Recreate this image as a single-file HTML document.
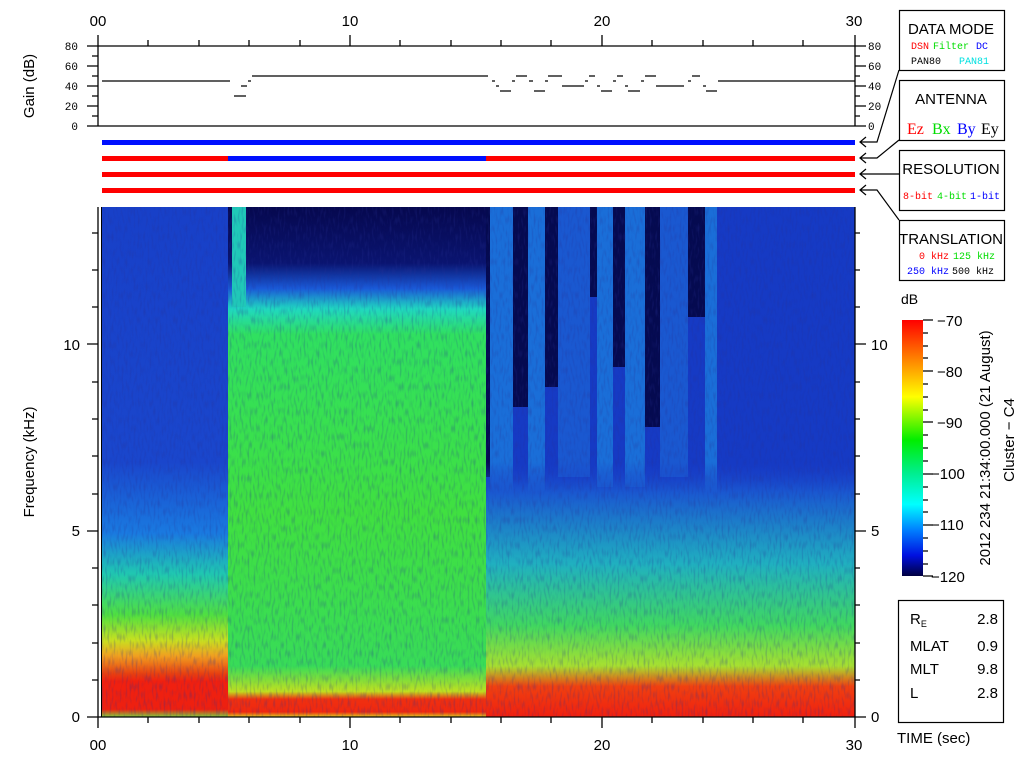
<!DOCTYPE html>
<html><head><meta charset="utf-8"><style>
html,body{margin:0;padding:0;background:#fff;width:1024px;height:768px;overflow:hidden}
svg text{font-family:"Liberation Sans Narrow","Liberation Sans",sans-serif}
.m{font-family:"Liberation Mono",monospace}
</style></head><body>
<svg width="1024" height="768" viewBox="0 0 1024 768" xmlns="http://www.w3.org/2000/svg">
<defs>
<linearGradient id="gA" x1="0" y1="0" x2="0" y2="1">
<stop offset="0" stop-color="#1840c8"/><stop offset="0.5" stop-color="#1a46cc"/>
<stop offset="0.64" stop-color="#1a7ae0"/><stop offset="0.72" stop-color="#20c8b0"/>
<stop offset="0.8" stop-color="#50e040"/><stop offset="0.85" stop-color="#c8e020"/>
<stop offset="0.88" stop-color="#f0a020"/><stop offset="0.915" stop-color="#e84010"/>
<stop offset="0.93" stop-color="#f02010"/><stop offset="0.985" stop-color="#ee2010"/><stop offset="1" stop-color="#80d040"/>
</linearGradient>
<linearGradient id="gB" x1="0" y1="0" x2="0" y2="1">
<stop offset="0" stop-color="#06084e"/><stop offset="0.11" stop-color="#0a1470"/>
<stop offset="0.16" stop-color="#1a5ad8"/><stop offset="0.2" stop-color="#20d8c0"/>
<stop offset="0.25" stop-color="#30e060"/><stop offset="0.6" stop-color="#40e040"/><stop offset="0.9" stop-color="#38dc58"/>
<stop offset="0.95" stop-color="#c0e020"/><stop offset="0.965" stop-color="#f03010"/>
<stop offset="0.99" stop-color="#f02810"/><stop offset="1" stop-color="#e0d020"/>
</linearGradient>
<linearGradient id="gC" x1="0" y1="0" x2="0" y2="1">
<stop offset="0" stop-color="#1a3ec8" stop-opacity="0"/><stop offset="0.5" stop-color="#1a3ec8" stop-opacity="0"/>
<stop offset="0.56" stop-color="#1a58d0"/><stop offset="0.7" stop-color="#20b0c0"/>
<stop offset="0.82" stop-color="#40d860"/><stop offset="0.9" stop-color="#a8e030"/>
<stop offset="0.94" stop-color="#f04010"/><stop offset="1" stop-color="#f02010"/>
</linearGradient>
<linearGradient id="cb" x1="0" y1="0" x2="0" y2="1">
<stop offset="0" stop-color="#ff0000"/><stop offset="0.15" stop-color="#ff8000"/>
<stop offset="0.3" stop-color="#ffff00"/><stop offset="0.47" stop-color="#00ee00"/>
<stop offset="0.6" stop-color="#00ee90"/><stop offset="0.72" stop-color="#00ffff"/>
<stop offset="0.82" stop-color="#0080ff"/><stop offset="0.92" stop-color="#0010e0"/>
<stop offset="1" stop-color="#000040"/>
</linearGradient>
<filter id="n" x="0" y="0" width="1" height="1"><feTurbulence type="fractalNoise" baseFrequency="0.5 0.12" numOctaves="1" seed="3"/><feColorMatrix values="0 0 0 0 0.02 0 0 0 0 0.03 0 0 0 0 0.3 0 0 0 1.6 -0.75"/><feComposite in2="SourceGraphic" operator="in"/></filter>
</defs>

<g font-size="15" text-anchor="middle">
<text x="98" y="26">00</text><text x="350" y="26">10</text><text x="602" y="26">20</text><text x="854" y="26">30</text>
</g>
<g stroke="#000" stroke-width="1.3" fill="none">
<line x1="87" y1="46" x2="855" y2="46"/><line x1="87" y1="126" x2="855" y2="126"/>
<line x1="98" y1="35" x2="98" y2="126"/><line x1="855" y1="35" x2="855" y2="126"/>
<path d="M87 66h11M87 86h11M87 106h11M92 56h6M92 76h6M92 96h6M92 116h6"/>
<path d="M855 46h11M855 66h11M855 86h11M855 106h11M855 126h11M855 56h5M855 76h5M855 96h5M855 116h5"/>
<path d="M148 40v6M199 40v6M249 40v6M300 40v6M350 35v11M400 40v6M451 40v6M501 40v6M551 40v6M602 35v11M652 40v6M703 40v6M753 40v6M803 40v6"/>
<path d="M102 81H230M234 96h12M241 86h6M248 81h3M252 76H488M492 81h3M496 86h3M500 91h11M512 81h3M516 76h11M529 81h4M534 91h11M545 81h3M548 76h14M562 86h22M585 81h3M589 76h6M597 86h3M601 91h11M613 81h3M617 76h6M625 86h3M628 91h12M641 81h3M645 76h11M656 86h28M688 81h3M692 76h8M703 86h3M706 91h11M718 81h137"/>
</g>
<g font-size="11" text-anchor="end">
<text x="78" y="50" class="m">80</text><text x="78" y="70" class="m">60</text><text x="78" y="90" class="m">40</text><text x="78" y="110" class="m">20</text><text x="78" y="130" class="m">0</text>
</g>
<g font-size="11">
<text x="868" y="50" class="m">80</text><text x="868" y="70" class="m">60</text><text x="868" y="90" class="m">40</text><text x="868" y="110" class="m">20</text><text x="868" y="130" class="m">0</text>
</g>
<text transform="translate(34,86) rotate(-90)" font-size="15" text-anchor="middle">Gain (dB)</text>

<rect x="102" y="140" width="753" height="5" fill="#0010ff"/>
<rect x="102" y="156" width="126" height="5" fill="#ff0000"/>
<rect x="228" y="156" width="258" height="5" fill="#0010ff"/>
<rect x="486" y="156" width="369" height="5" fill="#ff0000"/>
<rect x="102" y="172" width="753" height="5" fill="#ff0000"/>
<rect x="102" y="188" width="753" height="5" fill="#ff0000"/>

<g stroke="#000" stroke-width="1.2" fill="none">
<path d="M899 70L877 142H860M866 137l-6 5 6 5"/>
<path d="M899 140L877 158H860M866 153l-6 5 6 5"/>
<path d="M899 174H860M866 169l-6 5 6 5"/>
<path d="M899 220L877 190H860M866 185l-6 5 6 5"/>
</g>

<rect x="102" y="207" width="126" height="510" fill="url(#gA)"/>
<rect x="228" y="207" width="258" height="510" fill="url(#gB)"/>
<rect x="232" y="207" width="14" height="100" fill="#20c8b8"/>
<rect x="486" y="207" width="369" height="510" fill="#163ac4"/>
<g fill="#050a50">
<rect x="486" y="207" width="4" height="270"/>
<rect x="513" y="207" width="15" height="200"/>
<rect x="545" y="207" width="13" height="180"/>
<rect x="590" y="207" width="7" height="90"/>
<rect x="613" y="207" width="12" height="160"/>
<rect x="645" y="207" width="15" height="220"/>
<rect x="688" y="207" width="17" height="110"/>
</g>
<g fill="#1a6ed8">
<rect x="490" y="207" width="23" height="290"/>
<rect x="528" y="207" width="17" height="290"/>
<rect x="558" y="207" width="32" height="270" fill="#1a58d0"/>
<rect x="597" y="207" width="16" height="280"/>
<rect x="625" y="207" width="20" height="280"/>
<rect x="660" y="207" width="28" height="270" fill="#1a58d0"/>
<rect x="705" y="207" width="12" height="290"/>
</g>
<rect x="486" y="207" width="369" height="510" fill="url(#gC)"/>
<rect x="102" y="207" width="753" height="510" fill="#000" filter="url(#n)" opacity="0.5"/>
<rect x="101" y="207" width="1" height="510" fill="#000"/>

<g stroke="#000" stroke-width="1.3" fill="none">
<line x1="98" y1="717" x2="855" y2="717"/>
<line x1="98" y1="207" x2="98" y2="728"/><line x1="855" y1="207" x2="855" y2="728"/>
<path d="M87 717h11M87 531h11M87 344h11M92 680h6M92 643h6M92 605h6M92 568h6M92 494h6M92 456h6M92 419h6M92 382h6M92 307h6M92 270h6M92 233h6"/>
<path d="M855 717h11M855 531h11M855 344h11M855 680h5M855 643h5M855 605h5M855 568h5M855 494h5M855 456h5M855 419h5M855 382h5M855 307h5M855 270h5M855 233h5"/>
<path d="M148 717v6M199 717v6M249 717v6M300 717v6M350 717v11M400 717v6M451 717v6M501 717v6M551 717v6M602 717v11M652 717v6M703 717v6M753 717v6M803 717v6"/>
</g>
<g font-size="15" text-anchor="end">
<text x="80" y="722">0</text><text x="80" y="536">5</text><text x="80" y="350">10</text>
</g>
<g font-size="15">
<text x="871" y="722">0</text><text x="871" y="536">5</text><text x="871" y="350">10</text>
</g>
<text transform="translate(34,462) rotate(-90)" font-size="15" text-anchor="middle">Frequency (kHz)</text>
<g font-size="15" text-anchor="middle">
<text x="98" y="750">00</text><text x="350" y="750">10</text><text x="602" y="750">20</text><text x="854" y="750">30</text>
</g>
<text x="897" y="743" font-size="15">TIME (sec)</text>

<g fill="#fff" stroke="#000" stroke-width="1.2">
<rect x="899.5" y="10.5" width="105" height="60"/>
<rect x="899.5" y="80.5" width="105" height="60"/>
<rect x="899.5" y="150.5" width="105" height="60"/>
<rect x="899.5" y="220.5" width="105" height="60"/>
<rect x="898.5" y="600.5" width="105" height="122"/>
</g>
<g font-size="15" text-anchor="middle">
<text x="951" y="34">DATA MODE</text>
<text x="951" y="104">ANTENNA</text>
<text x="951" y="174">RESOLUTION</text>
<text x="951" y="244">TRANSLATION</text>
</g>
<g font-size="10">
<text x="911" y="49" fill="#ff0000" class="m">DSN</text><text x="933" y="49" fill="#00dd00" class="m">Filter</text><text x="976" y="49" fill="#0000ff" class="m">DC</text>
<text x="911" y="64" fill="#000" class="m">PAN80</text><text x="959" y="64" fill="#00e0e0" class="m">PAN81</text>
<text x="903" y="199" fill="#ff0000" class="m">8-bit</text><text x="937" y="199" fill="#00dd00" class="m">4-bit</text><text x="970" y="199" fill="#0000ff" class="m">1-bit</text>
<text x="919" y="259" fill="#ff0000" class="m">0 kHz</text><text x="953" y="259" fill="#00dd00" class="m">125 kHz</text>
<text x="907" y="274" fill="#0000ff" class="m">250 kHz</text><text x="952" y="274" fill="#000" class="m">500 kHz</text>
</g>
<g font-size="16">
<text x="907" y="134" fill="#ff0000" style="font-family:'Liberation Serif',serif">Ez</text>
<text x="932" y="134" fill="#00dd00" style="font-family:'Liberation Serif',serif">Bx</text>
<text x="957" y="134" fill="#0000ff" style="font-family:'Liberation Serif',serif">By</text>
<text x="981" y="134" fill="#000" style="font-family:'Liberation Serif',serif">Ey</text>
</g>

<text x="901" y="304" font-size="14">dB</text>
<rect x="902" y="320" width="21" height="256" fill="url(#cb)"/>
<g stroke="#000" stroke-width="1.2">
<path d="M923 320h10M923 371h10M923 422h10M923 474h10M923 525h10M923 576h10M923 333h5M923 346h5M923 358h5M923 384h5M923 397h5M923 410h5M923 435h5M923 448h5M923 461h5M923 487h5M923 500h5M923 512h5M923 538h5M923 551h5M923 564h5"/>
</g>
<g font-size="15">
<text x="937" y="326">−70</text><text x="937" y="377">−80</text><text x="937" y="428">−90</text>
<text x="931" y="479">−100</text><text x="931" y="530">−110</text><text x="931" y="582">−120</text>
</g>
<text transform="translate(990,448) rotate(-90)" font-size="15" text-anchor="middle">2012 234 21:34:00.000 (21 August)</text>
<text transform="translate(1014,440) rotate(-90)" font-size="15" text-anchor="middle">Cluster − C4</text>

<g font-size="15">
<text x="910" y="624">R<tspan font-size="9" dy="3">E</tspan></text>
<text x="910" y="651">MLAT</text><text x="910" y="674">MLT</text><text x="910" y="698">L</text>
</g>
<g font-size="15" text-anchor="end">
<text x="998" y="624">2.8</text><text x="998" y="651">0.9</text><text x="998" y="674">9.8</text><text x="998" y="698">2.8</text>
</g>
</svg>
</body></html>
